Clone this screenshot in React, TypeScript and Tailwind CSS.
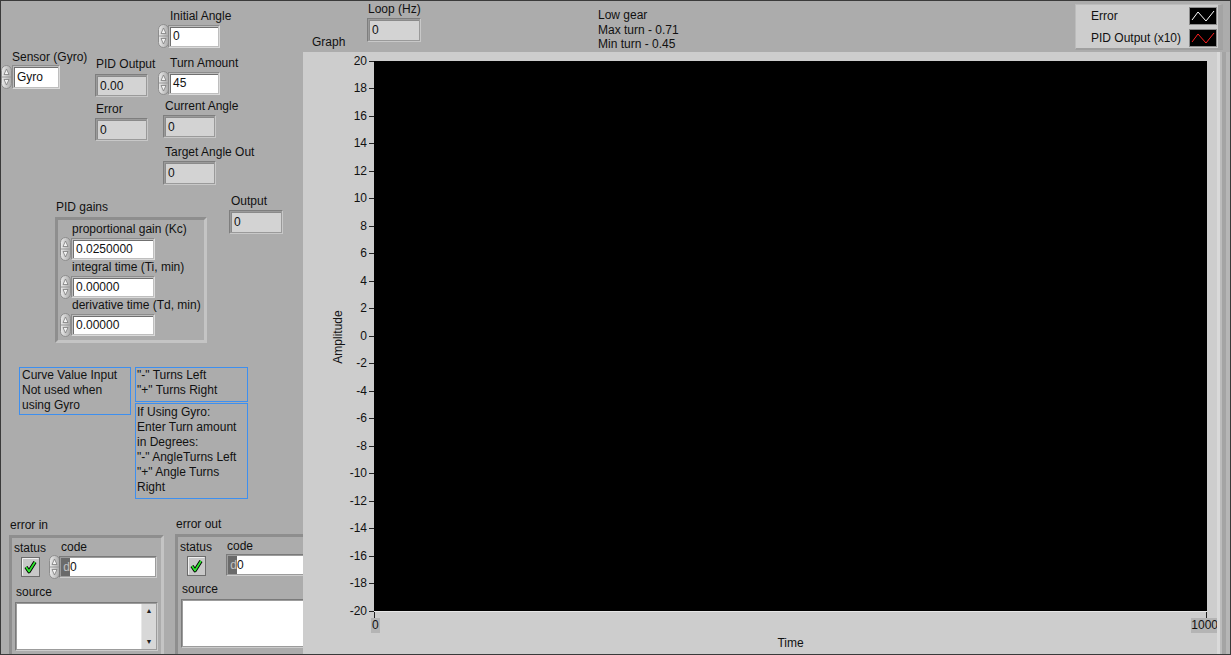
import React from "react"

type Box = { className?: string; children?: React.ReactNode }

function Spin({ className = "" }: { className?: string }) {
  return (
    <svg className={`shrink-0 ${className}`} width="11" height="24" viewBox="0 0 11 24">
      <defs>
        <linearGradient id="spg" x1="0" x2="1" y1="0" y2="0">
          <stop offset="0" stopColor="#ececec" />
          <stop offset="1" stopColor="#a9a9a9" />
        </linearGradient>
      </defs>
      <rect x="0.5" y="0.5" width="10" height="23" rx="5" fill="url(#spg)" stroke="#8d8d8d" />
      <line x1="1" y1="12" x2="10" y2="12" stroke="#9a9a9a" />
      <path d="M3 9.5 L5.5 4 L8 9.5 Z" fill="#f2f2f2" stroke="#7c7c7c" strokeWidth="0.8" />
      <path d="M3 14.5 L5.5 20 L8 14.5 Z" fill="#f2f2f2" stroke="#7c7c7c" strokeWidth="0.8" />
    </svg>
  )
}

// numeric control: white field in a sunken frame
const Ctrl = ({ className, children }: Box) => (
  <div className={`p-px bg-[#bebebe] border border-t-[#8c8c8c] border-l-[#8c8c8c] border-b-[#dadada] border-r-[#dadada] ${className}`}>
    <div className="h-full bg-white border-t border-l border-[#707070] pl-[2px] flex items-center">{children}</div>
  </div>
)

// numeric indicator: grey field
const Ind = ({ className, children }: Box) => (
  <div className={`p-px bg-[#9a9a9a] border border-t-[#7e7e7e] border-l-[#7e7e7e] border-b-[#c8c8c8] border-r-[#c8c8c8] ${className}`}>
    <div className="h-full bg-[#d3d3d3] border-t border-l border-[#8a8a8a] pl-[2px] flex items-center">{children}</div>
  </div>
)

// a front panel object: label above its control, placed on the panel
const Field = ({ className, children }: Box) => (
  <div className={`absolute flex flex-col leading-[15px] whitespace-nowrap ${className}`}>{children}</div>
)

const frame = "border-[3px] border-t-[#8e8e8e] border-l-[#8e8e8e] border-b-[#c4c4c4] border-r-[#c4c4c4]"

function Check({ className = "" }: { className?: string }) {
  return (
    <svg className={`shrink-0 ${className}`} width="19" height="20" viewBox="0 0 19 20">
      <rect x="0.5" y="0.5" width="18" height="19" fill="#c8c8c8" stroke="#6c6c6c" />
      <path d="M1.5 18.5 V1.5 H17.5" fill="none" stroke="#f0f0f0" />
      <path d="M5 10 L8 14.5 L14 5" fill="none" stroke="#000" strokeWidth="3.6" strokeLinejoin="round" />
      <path d="M5 10 L8 14.5 L14 5" fill="none" stroke="#2ee62e" strokeWidth="1.8" strokeLinejoin="round" />
    </svg>
  )
}

const CodeBox = ({ className }: { className: string }) => (
  <div className={`flex bg-[#9c9c9c] p-px border border-t-[#7a7a7a] border-l-[#7a7a7a] border-b-[#cccccc] border-r-[#cccccc] ${className}`}>
    <div className="w-[9px] bg-[#6a6a6a] text-[#c0c0c0] flex items-center justify-end">d</div>
    <div className="flex-1 bg-white flex items-center">0</div>
  </div>
)

const sunken = "p-px bg-[#9c9c9c] border border-t-[#7a7a7a] border-l-[#7a7a7a] border-b-[#cccccc] border-r-[#cccccc]"

function Swatch({ color }: { color: string }) {
  return (
    <svg width="28" height="18" viewBox="0 0 28 18">
      <rect x="0.5" y="0.5" width="27" height="17" fill="#000" stroke="#8a8a8a" />
      <polyline points="3,13 9,5 17,14 25,4" fill="none" stroke={color} strokeWidth="1" />
    </svg>
  )
}

function ErrorCluster({ title, className, boxW, scroll }: { title: string; className: string; boxW: string; scroll: boolean }) {
  return (
    <Field className={className}>
      <div className="ml-px">{title}</div>
      <div className={`mt-[2px] ${boxW} h-[130px] ${frame} pt-[2px] pl-[2px]`}>
        <div className="flex">
          <div className="w-[35px] flex flex-col">
            <div className="mt-px">status</div>
            <Check className="ml-[7px] mt-px" />
          </div>
          <div className="flex flex-col">
            <div className="ml-[12px]">code</div>
            <div className="flex items-center">
              {scroll ? <Spin /> : <div className="w-[12px]" />}
              <CodeBox className="-ml-px w-[98px] h-[22px]" />
            </div>
          </div>
        </div>
        <div className="ml-[2px] mt-[6px]">source</div>
        <div className={`ml-px mt-[2px] w-[143px] h-[49px] flex ${sunken}`}>
          <div className="flex-1 bg-white" />
          {scroll && (
            <div className="w-[15px] bg-[#d8d8d8] border-l border-[#e8e8e8] flex flex-col justify-between items-center py-[3px] text-[7px] leading-[8px] text-[#222]">
              <span>▲</span>
              <span>▼</span>
            </div>
          )}
        </div>
      </div>
    </Field>
  )
}

const yTicks = [20, 18, 16, 14, 12, 10, 8, 6, 4, 2, 0, -2, -4, -6, -8, -10, -12, -14, -16, -18, -20]

const gains = [
  ["proportional gain (Kc)", "0.0250000"],
  ["integral time (Ti, min)", "0.00000"],
  ["derivative time (Td, min)", "0.00000"],
]

export default function App() {
  return (
    <div className="relative w-[1231px] h-[655px] overflow-hidden bg-[#acacac] font-['Liberation_Sans',Arial,sans-serif] text-[12px] text-[#111]">
      <Field className="left-[158px] top-[9px]">
        <div className="ml-[12px]">Initial Angle</div>
        <div className="flex items-center">
          <Spin />
          <Ctrl className="-ml-px w-[52px] h-[23px]">0</Ctrl>
        </div>
      </Field>

      <Field className="left-[1px] top-[50px]">
        <div className="ml-[11px]">Sensor (Gyro)</div>
        <div className="flex items-start">
          <Spin />
          <Ctrl className="w-[48px] h-[24px]">Gyro</Ctrl>
        </div>
      </Field>

      <Field className="left-[95px] top-[57px]">
        <div className="ml-px">PID Output</div>
        <Ind className="mt-[2px] w-[53px] h-[23px]">0.00</Ind>
      </Field>

      <Field className="left-[158px] top-[56px]">
        <div className="ml-[12px]">Turn Amount</div>
        <div className="flex items-center">
          <Spin />
          <Ctrl className="-ml-px w-[52px] h-[23px]">45</Ctrl>
        </div>
      </Field>

      <Field className="left-[95px] top-[102px]">
        <div className="ml-px">Error</div>
        <Ind className="mt-px w-[53px] h-[23px]">0</Ind>
      </Field>

      <Field className="left-[163px] top-[99px]">
        <div className="ml-[2px]">Current Angle</div>
        <Ind className="mt-px w-[53px] h-[23px]">0</Ind>
      </Field>

      <Field className="left-[163px] top-[145px]">
        <div className="ml-[2px]">Target Angle Out</div>
        <Ind className="mt-px w-[53px] h-[24px]">0</Ind>
      </Field>

      <Field className="left-[229px] top-[194px]">
        <div className="ml-[2px]">Output</div>
        <Ind className="mt-px w-[54px] h-[24px]">0</Ind>
      </Field>

      {/* PID gains cluster */}
      <Field className="left-[55px] top-[200px]">
        <div className="ml-px">PID gains</div>
        <div className={`mt-[2px] w-[152px] h-[126px] ${frame} flex flex-col pt-[2px] pl-[2px]`}>
          {gains.map(([l, v]) => (
            <div key={l} className="flex flex-col h-[38px]">
              <div className="ml-[12px]">{l}</div>
              <div className="flex items-center mt-px h-[22px]">
                <Spin />
                <Ctrl className="w-[84px] h-[22px]">{v}</Ctrl>
              </div>
            </div>
          ))}
        </div>
      </Field>

      {/* free labels */}
      <div className="absolute left-[19px] top-[367px] flex items-start gap-[4px] leading-[15px] whitespace-nowrap">
        <div className="w-[112px] h-[48px] border border-[#3d8ff0] pl-[2px]">
          Curve Value Input<br />Not used when<br />using Gyro
        </div>
        <div className="flex flex-col gap-px">
          <div className="w-[113px] h-[35px] border border-[#3d8ff0] pl-px">
            "-" Turns Left<br />"+" Turns Right
          </div>
          <div className="w-[113px] h-[96px] border border-[#3d8ff0] pl-px pt-px">
            If Using Gyro:<br />Enter Turn amount<br />in Degrees:<br />"-" AngleTurns Left<br />"+" Angle Turns<br />Right
          </div>
        </div>
      </div>

      <ErrorCluster title="error in" className="left-[9px] top-[518px]" boxW="w-[155px]" scroll={true} />
      <ErrorCluster title="error out" className="left-[175px] top-[517px]" boxW="w-[160px]" scroll={false} />

      {/* graph header */}
      <Field className="left-[367px] top-[2px]">
        <div className="ml-px">Loop (Hz)</div>
        <Ind className="mt-px w-[54px] h-[24px]">0</Ind>
      </Field>
      <Field className="left-[312px] top-[35px]">Graph</Field>
      <div className="absolute left-[598px] top-[8px] leading-[14.5px] whitespace-nowrap">
        Low gear<br />Max turn - 0.71<br />Min turn - 0.45
      </div>

      {/* graph */}
      <div className="absolute left-[303px] top-[52px] w-[928px] h-[603px] bg-[#cdcdcd] flex leading-[15px]">
        <div className="w-[914px] h-full">
          <div className="flex items-start pt-[9px]">
            <div className="relative w-[71px] h-[551px]">
              <div className="absolute left-[35px] top-[276px] -translate-x-1/2 -translate-y-1/2 -rotate-90 whitespace-nowrap">
                Amplitude
              </div>
              <div className="flex flex-col items-end -mt-[13.75px]">
                {yTicks.map((v) => (
                  <div key={v} className="h-[27.5px] flex items-center">
                    <span>{v}</span>
                    <span className="ml-[2px] w-[5px] h-px bg-[#222]" />
                  </div>
                ))}
              </div>
            </div>
            <div className="w-[833px] h-[551px] bg-black border-b border-[#e6e6e6]" />
          </div>
          <div className="ml-[71px] w-[833px]">
            <div className="flex justify-between h-[6px]">
              <span className="w-px h-full bg-[#222]" />
              <span className="w-px h-full bg-[#222]" />
            </div>
            <div className="flex justify-between">
              <span className="-ml-[3px] px-px bg-[#b4b4b4]">0</span>
              <span className="-mr-[11px] bg-[#b4b4b4]">1000</span>
            </div>
            <div className="mt-[3px] text-center">Time</div>
          </div>
        </div>
        <div className="flex h-full">
          <div className="w-[3px] bg-[#dadada]" />
          <div className="w-[2px] bg-[#bcbcbc]" />
          <div className="w-[4px] bg-[#a4a4a4]" />
          <div className="w-[5px] bg-[#b6b6b6]" />
        </div>
      </div>

      {/* plot legend */}
      <div className="absolute left-[1075px] top-[4px] w-[148px] h-[46px] bg-[#cdcdcd] border-t border-l border-[#bcbcbc] border-r-[5px] border-r-[#a3a3a3] border-b-[2px] border-b-[#a0a0a0] flex flex-col pt-[2px] gap-[4px] leading-[15px]">
        <div className="flex items-center justify-between pl-[15px] pr-px">
          <span>Error</span>
          <Swatch color="#ffffff" />
        </div>
        <div className="flex items-center justify-between pl-[15px] pr-px">
          <span>PID Output (x10)</span>
          <Swatch color="#ff2020" />
        </div>
      </div>

      {/* window frame */}
      <div className="absolute inset-0 border border-[#3a3a3a] pointer-events-none" />
    </div>
  )
}
